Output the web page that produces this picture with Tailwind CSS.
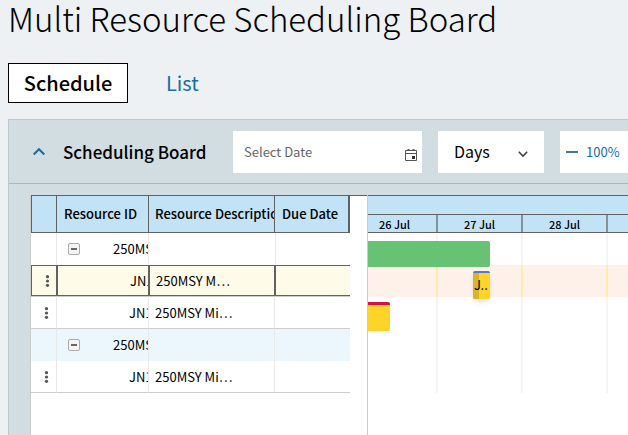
<!DOCTYPE html>
<html lang="en">
<head>
    <meta charset="UTF-8">
    <meta name="viewport" content="width=device-width, initial-scale=1.0">
    <script src="https://cdn.jsdelivr.net/npm/@tailwindcss/browser@4"></script>
    <title>Multi Resource Scheduling Board</title>
</head>
<body class="h-screen overflow-hidden flex flex-col bg-[#edf1f4] text-black font-['Noto_Sans_CJK_SC','Open_Sans',sans-serif]">
    <h1 class="pl-2 text-[33px] leading-9 font-light whitespace-nowrap">Multi Resource Scheduling Board</h1>

    <nav class="flex mt-[27px] ml-2 text-[20px] leading-10">
        <a href="#schedule" class="w-30 h-10 flex items-center justify-center bg-white border border-black font-medium">Schedule</a>
        <a href="#list" class="h-10 px-[38px] flex items-center text-[#1a6ca0]">List</a>
    </nav>

    <main class="flex-1 min-h-0 flex flex-col mt-4 ml-2 bg-[#d1dde1] border-l border-t border-[#bac9cd]">
        <header class="shrink-0 flex items-center gap-4 pt-[11px] pb-2.5 border-b border-[#9bbcc1]">
            <div class="flex items-center w-52">
                <button type="button" aria-label="Collapse" class="ml-6 w-3 h-3 flex items-center">
                    <svg class="w-3 h-3" viewBox="0 0 12 12" fill="none" stroke="#1a6ca0" stroke-width="2"><path d="M0.7 8.5 6 3.2 11.3 8.5"/></svg>
                </button>
                <h2 class="ml-[18px] text-[17px] leading-6 font-medium whitespace-nowrap">Scheduling Board</h2>
            </div>
            <div class="relative shrink-0 w-[189px] h-[42px] bg-white">
                <input type="text" aria-label="Select Date" placeholder="Select Date" class="w-full h-full pl-[11px] pr-8 pb-0.5 text-[13px] outline-none placeholder:text-[#666]">
                <svg class="absolute right-[5px] top-[17px] w-3 h-3.5" viewBox="0 0 12 14" fill="none" stroke="#555" stroke-width="1"><path d="M.5 2.5h11v10H.5zM.5 5.5h11"/><path d="M3.5 1v2M8.500 1v2" stroke-width="2"/><path d="M7 8h3v3H7z" fill="#333" stroke="none"/></svg>
            </div>
            <div class="relative shrink-0 w-[106px] h-[42px] bg-white">
                <select aria-label="Scale" class="appearance-none w-full h-full pl-4 pb-0.5 text-base outline-none">
                    <option>Days</option>
                </select>
                <svg class="absolute right-4 top-[18px] w-2.5 h-2.5 pointer-events-none" viewBox="0 0 10 10" fill="none" stroke="#444" stroke-width="1.600"><path d="M.8 2.800 5 7 9.200 2.800"/></svg>
            </div>
            <div class="flex-1 h-[42px] pl-1.5 flex items-center gap-2 bg-white text-[13px] text-[#1a6ca0] overflow-hidden">
                <button type="button" aria-label="Zoom out" class="shrink-0"><svg class="w-3 h-3" viewBox="0 0 12 12"><path d="M0 5h12v2H0z" fill="#44789f"/></svg></button>
                <span>100%</span>
            </div>
        </header>

        <div class="flex-1 min-h-0 flex mt-[11px] ml-[21px] bg-white border-l border-[#ccc] overflow-hidden">
            <div class="shrink-0 w-[336px] border-t border-[#616161]">
                <table class="w-[319px] table-fixed border-separate border-spacing-0 text-[13px] leading-5 whitespace-nowrap">
                    <colgroup>
                        <col class="w-[26px]"><col class="w-[92px]"><col class="w-[126px]"><col class="w-[75px]">
                    </colgroup>
                    <thead>
                        <tr class="h-[37px] bg-[#c2e3f6] text-left">
                            <th class="border-l border-r border-b border-[#616161]"></th>
                            <th class="pl-[7px] font-medium border-r border-b border-[#616161] overflow-hidden">Resource ID</th>
                            <th class="pl-1.5 font-medium border-r border-b border-[#616161] overflow-hidden">Resource Description</th>
                            <th class="pl-[7px] font-medium border-r-2 border-b border-[#616161] overflow-hidden">Due Date</th>
                        </tr>
                    </thead>
                    <tbody>
                        <tr class="h-8">
                            <td class="border-r border-[#e8e8e8]"></td>
                            <td class="pl-[11px] border-r border-[#e8e8e8] overflow-hidden">
                                <div class="flex items-center gap-[33px]">
                                    <button type="button" aria-label="Collapse group" class="shrink-0 w-3 h-3 flex items-center justify-center border border-[#aaa] rounded-xs bg-[#f4f4f4]"><span class="w-1.5 h-0.5 bg-[#666]"></span></button>
                                    <span>250MSY</span>
                                </div>
                            </td>
                            <td></td>
                            <td class="border-l border-[#e8e8e8]"></td>
                        </tr>
                        <tr class="h-[31px] bg-[#fefce8]">
                            <td class="border border-[#616161]"><button type="button" aria-label="Row menu" class="block ml-[13px]"><svg class="w-[5px] h-3" viewBox="0 0 5 12" fill="#555"><circle cx="2.500" cy="1.700" r="1.600"/><circle cx="2.500" cy="6" r="1.600"/><circle cx="2.500" cy="10.300" r="1.600"/></svg></button></td>
                            <td class="pl-[72px] border border-[#616161] overflow-hidden">JN1</td>
                            <td class="pl-1.5 border border-[#616161] overflow-hidden">250MSY M…</td>
                            <td class="border-l border-t border-b border-[#616161]"></td>
                        </tr>
                        <tr class="h-[33px]">
                            <td class="border-t border-b border-r border-t-[#ccc] border-b-[#ccc] border-r-[#e8e8e8]"><button type="button" aria-label="Row menu" class="block ml-[13px]"><svg class="w-[5px] h-3" viewBox="0 0 5 12" fill="#555"><circle cx="2.500" cy="1.700" r="1.600"/><circle cx="2.500" cy="6" r="1.600"/><circle cx="2.500" cy="10.300" r="1.600"/></svg></button></td>
                            <td class="pl-[72px] border-t border-b border-r border-t-[#ccc] border-b-[#ccc] border-r-[#e8e8e8] overflow-hidden">JN1</td>
                            <td class="pl-1.5 border-t border-b border-r border-t-[#ccc] border-b-[#ccc] border-r-[#e8e8e8] overflow-hidden">250MSY Mi…</td>
                            <td class="border-t border-b border-[#ccc]"></td>
                        </tr>
                        <tr class="h-8 bg-[#ecf7fd]">
                            <td class="border-r border-[#e8e8e8]"></td>
                            <td class="pl-[11px] border-r border-[#e8e8e8] overflow-hidden">
                                <div class="flex items-center gap-[33px]">
                                    <button type="button" aria-label="Collapse group" class="shrink-0 w-3 h-3 flex items-center justify-center border border-[#aaa] rounded-xs bg-[#f4f4f4]"><span class="w-1.5 h-0.5 bg-[#666]"></span></button>
                                    <span>250MSY</span>
                                </div>
                            </td>
                            <td class="border-r border-[#e8e8e8]"></td>
                            <td></td>
                        </tr>
                        <tr class="h-8">
                            <td class="border-b border-r border-b-[#ccc] border-r-[#e8e8e8]"><button type="button" aria-label="Row menu" class="block ml-[13px]"><svg class="w-[5px] h-3" viewBox="0 0 5 12" fill="#555"><circle cx="2.500" cy="1.700" r="1.600"/><circle cx="2.500" cy="6" r="1.600"/><circle cx="2.500" cy="10.300" r="1.600"/></svg></button></td>
                            <td class="pl-[72px] border-b border-r border-b-[#ccc] border-r-[#e8e8e8] overflow-hidden">JN1</td>
                            <td class="pl-1.5 border-b border-r border-b-[#ccc] border-r-[#e8e8e8] overflow-hidden">250MSY Mi…</td>
                            <td class="border-b border-[#ccc]"></td>
                        </tr>
                    </tbody>
                </table>
            </div>

            <!-- timeline, one column per day, scrolled 15px into the first one -->
            <div class="flex-1 min-w-0 flex flex-col border-l border-[#ccc] overflow-hidden">
                <div class="shrink-0 bg-[#c2e3f6] border-t border-b border-[#616161]">
                    <div class="h-[18px]"></div>
                    <div class="flex h-[18px] border-t border-[#616161] text-[11px] leading-[19px] font-medium text-center overflow-hidden">
                        <div class="-ml-[15px] shrink-0 w-[85px] border-r-2 border-[#819298]">26 Jul</div>
                        <div class="shrink-0 w-[85px] border-r-2 border-[#819298]">27 Jul</div>
                        <div class="shrink-0 w-[85px] border-r-2 border-[#819298]">28 Jul</div>
                        <div class="shrink-0 w-[85px] border-r-2 border-[#819298]"></div>
                    </div>
                </div>
                <div class="relative flex-1 overflow-hidden">
                    <div class="flex h-40">
                        <div class="-ml-[15px] shrink-0 w-[85px] border-r-2 border-[#f5f5f5]"></div>
                        <div class="shrink-0 w-[85px] border-r-2 border-[#f5f5f5]"></div>
                        <div class="shrink-0 w-[85px] border-r-2 border-[#f5f5f5]"></div>
                    </div>
                    <div class="absolute left-0 right-0 top-8 h-8 flex bg-[#fdf1e9]">
                        <div class="-ml-[15px] shrink-0 w-[85px] border-r-2 border-[#ffeca8]"></div>
                        <div class="shrink-0 w-[85px] border-r-2 border-[#ffeca8]"></div>
                        <div class="shrink-0 w-[85px] border-r-2 border-[#ffeca8]"></div>
                    </div>
                    <div class="absolute left-0 top-2 w-[122px] h-[26px] rounded-r-xs bg-[#67c274]"></div>
                    <div class="absolute left-[105px] top-[38px] w-[17px] h-7 rounded-xs border-t-2 border-[#5578d0] bg-[#ffd428] shadow-md overflow-hidden">
                        <div class="w-1.5 h-full bg-[#d6b42c]"></div>
                        <span class="absolute left-px top-0 text-[13px] leading-6">J..</span>
                    </div>
                    <div class="absolute left-0 top-[69px] w-[22px] h-[29px] rounded-r-xs border-t-3 border-[#dd0f3c] bg-[#ffd428]"></div>
                </div>
            </div>
        </div>
    </main>
</body>
</html>
